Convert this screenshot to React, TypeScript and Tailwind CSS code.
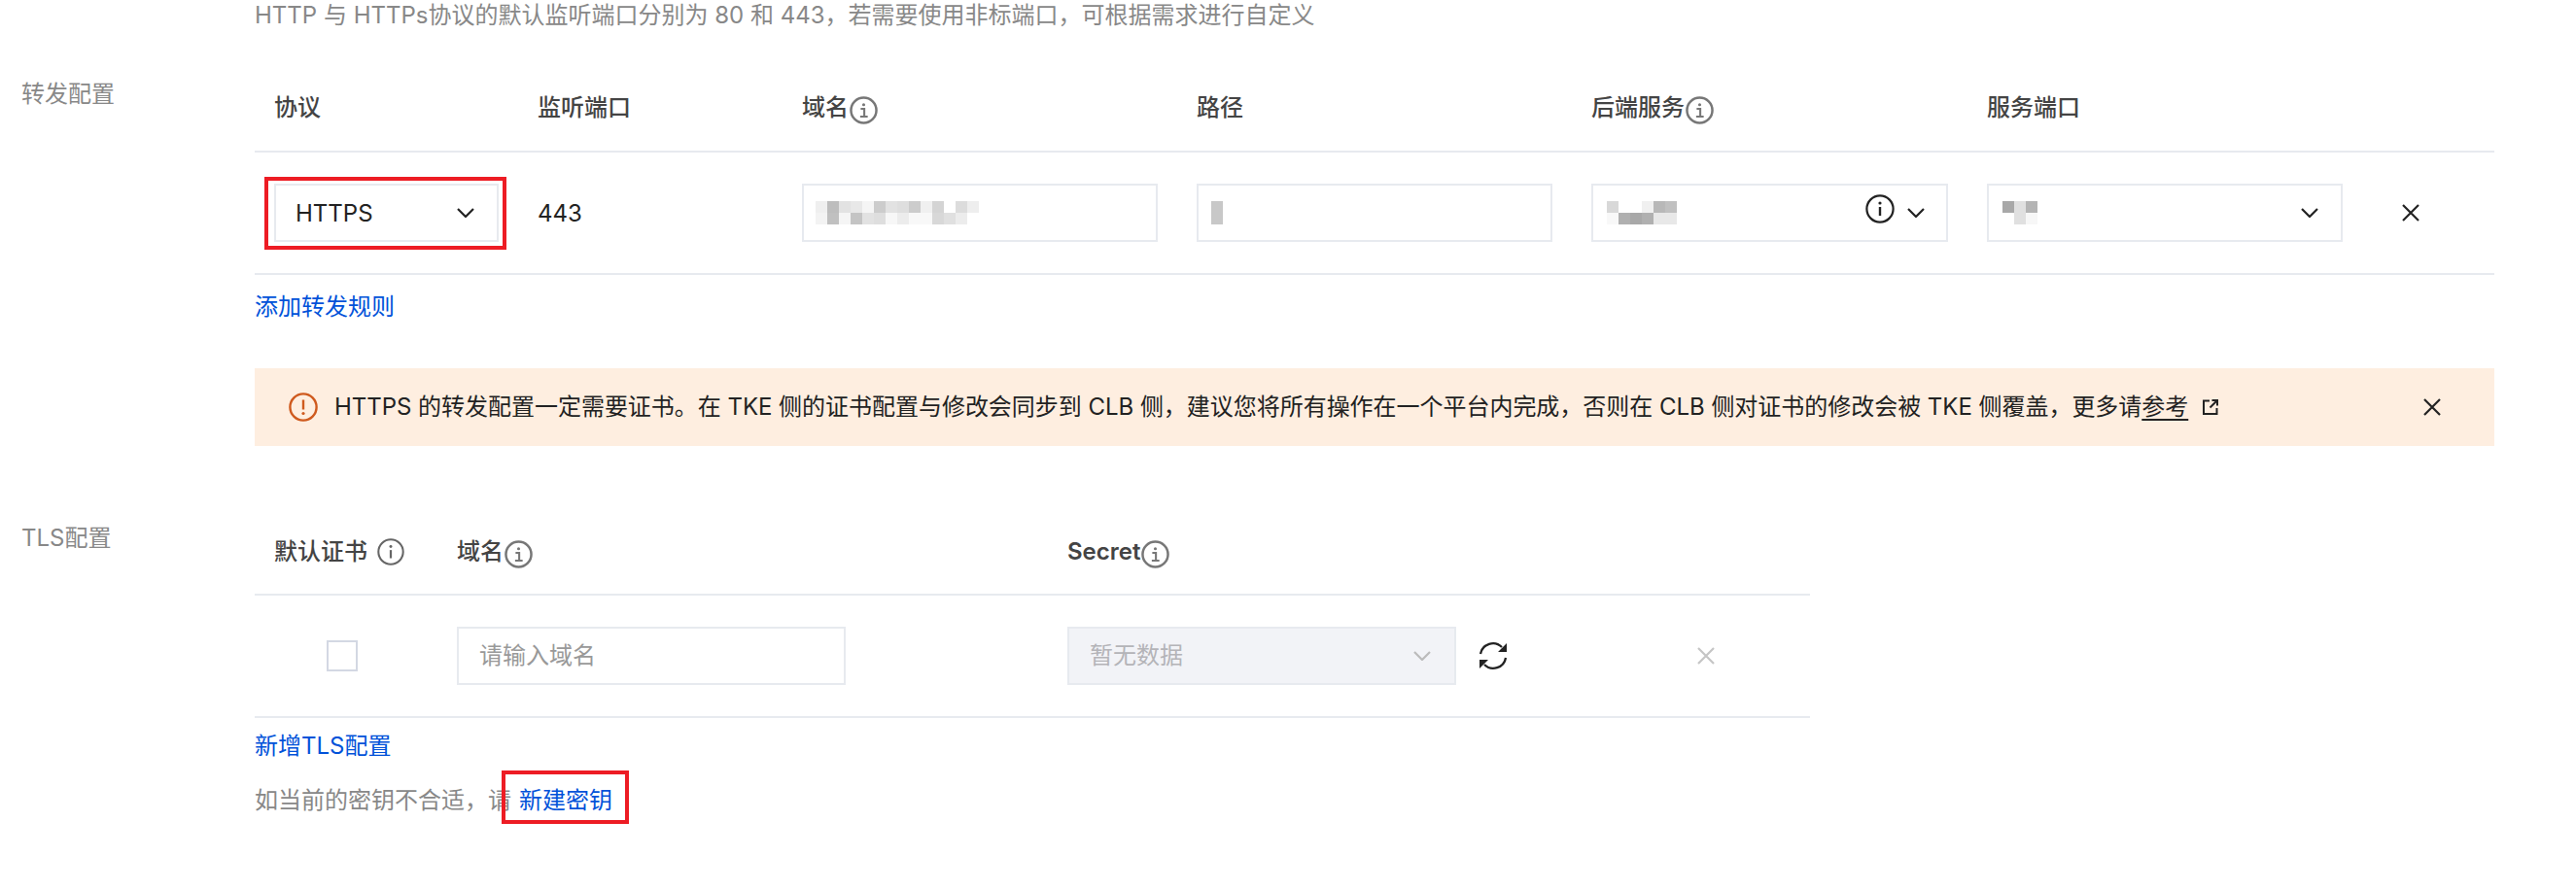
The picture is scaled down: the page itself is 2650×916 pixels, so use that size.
const forwardCols = "grid grid-cols-[271px_272px_406px_406px_407px_406px_136px]";
const tlsCols = "grid grid-cols-[188px_628px_647px_137px]";

function InfoSerif({ className = "" }: { className?: string }) {
  return (
    <svg viewBox="0 0 28 28" className={`w-[29px] h-[29px] shrink-0 ${className}`} fill="none" stroke="currentColor">
      <circle cx="14" cy="14" r="12.6" strokeWidth="2.4" />
      <path d="M11 12.5h3.6V20M10.5 20.2h7.5" strokeWidth="2" />
      <circle cx="14" cy="8.4" r="1.5" fill="currentColor" stroke="none" />
    </svg>
  );
}

function InfoPlain({ className = "" }: { className?: string }) {
  return (
    <svg viewBox="0 0 30 30" className={`shrink-0 ${className}`} fill="none" stroke="currentColor">
      <circle cx="15" cy="15" r="13.6" strokeWidth="2.2" />
      <path d="M15 13v9" strokeWidth="2.4" />
      <circle cx="15" cy="9" r="1.6" fill="currentColor" stroke="none" />
    </svg>
  );
}

function Chevron({ className = "" }: { className?: string }) {
  return (
    <svg viewBox="0 0 18 10" className={`w-[18px] h-[10px] shrink-0 ${className}`} fill="none" stroke="currentColor" strokeWidth="2.2">
      <path d="M1 1l8 8 8-8" />
    </svg>
  );
}

function Close({ className = "" }: { className?: string }) {
  return (
    <svg viewBox="0 0 20 20" className={`w-[20px] h-[20px] shrink-0 ${className}`} fill="none" stroke="currentColor" strokeWidth="2.2">
      <path d="M2 2l16 16M18 2L2 18" />
    </svg>
  );
}

function Mosaic({ rows }: { rows: string[][] }) {
  const cols = rows[0].length;
  return (
    <svg width={cols * 12} height={24} viewBox={`0 0 ${cols * 12} 24`} className="shrink-0" shapeRendering="crispEdges">
      {rows.map((row, r) =>
        row.map((fill, c) => <rect key={`${r}-${c}`} x={c * 12} y={r * 12} width="12" height="12" fill={fill} />)
      )}
    </svg>
  );
}

function Head({ label, icon, className = "" }: { label: string; icon?: boolean; className?: string }) {
  return (
    <div className={`flex items-center gap-[1px] pl-5 text-[#444444] font-medium ${className}`}>
      {label}
      {icon && <InfoSerif className="mt-[5px] text-[#777777]" />}
    </div>
  );
}

function Cell({ children }: { children: React.ReactNode }) {
  return <div className="flex items-center px-5">{children}</div>;
}

function Box({ children, className = "" }: { children?: React.ReactNode; className?: string }) {
  return <div className={`flex items-center h-[60px] border-2 border-[#e7eaef] ${className}`}>{children}</div>;
}

export default function App() {
  return (
    <div className="w-[2650px] h-[916px] bg-white overflow-hidden text-[24px] leading-[32px] text-[#222222] font-['Inter','Noto_Sans_CJK_SC',sans-serif]">
      <div className="pl-[262px] text-[#888888]">
        HTTP 与 HTTPs协议的默认监听端口分别为 80 和 443，若需要使用非标端口，可根据需求进行自定义
      </div>

      {/* 转发配置 */}
      <div className="flex mt-[34px]">
        <div className="w-[262px] shrink-0 pl-[22px] pt-[15px] text-[#888888]">转发配置</div>
        <div className="w-[2304px]">
          <div className={`${forwardCols} h-[91px] border-b-2 border-[#e7eaef]`}>
            <Head label="协议" />
            <Head label="监听端口" />
            <Head label="域名" icon />
            <Head label="路径" />
            <Head label="后端服务" icon />
            <Head label="服务端口" />
          </div>
          <div className={`${forwardCols} h-[126px] border-b-2 border-[#e7eaef]`}>
            <Cell>
              <div className="relative w-full">
                <Box className="w-full justify-between pl-[20px] pr-[23px]">
                  <span className="pt-[2px]">HTTPS</span>
                  <Chevron />
                </Box>
                <div className="absolute -left-[10px] -top-[7px] w-[249px] h-[75px] border-4 border-[#ed1c24]" />
              </div>
            </Cell>
            <Cell>
              <span className="pt-[2px]">443</span>
            </Cell>
            <Cell>
              <Box className="w-full pl-3">
                <Mosaic
                  rows={[
                    ["#efefef", "#bdbdbd", "#e2e2e2", "#e8e8e8", "#f5f5f5", "#cccccc", "#e2e2e2", "#dedede", "#cccccc", "#f0f0f0", "#d4d4d4", "#ffffff", "#dcdcdc", "#eeeeee"],
                    ["#f3f3f3", "#c0c0c0", "#f5f5f5", "#c4c4c4", "#e2e2e2", "#dedede", "#f7f7f7", "#ececec", "#f8f8f8", "#f8f8f8", "#d8d8d8", "#e0e0e0", "#ececec", "#ffffff"],
                  ]}
                />
              </Box>
            </Cell>
            <Cell>
              <Box className="w-full pl-[13px]">
                <Mosaic rows={[["#c8c8c8"], ["#c8c8c8"]]} />
              </Box>
            </Cell>
            <Cell>
              <Box className="w-full justify-between pl-[14px] pr-[22px]">
                <Mosaic
                  rows={[
                    ["#d8d8d8", "#ffffff", "#ffffff", "#f0f0f0", "#b8b8b8", "#c0c0c0"],
                    ["#f8f8f8", "#b0b0b0", "#a8a8a8", "#b0b0b0", "#e8e8e8", "#e8e8e8"],
                  ]}
                />
                <div className="flex items-center gap-[13px]">
                  <InfoPlain className="w-[30px] h-[30px] -mt-[8px] text-[#222222]" />
                  <Chevron />
                </div>
              </Box>
            </Cell>
            <Cell>
              <Box className="w-full justify-between pl-[14px] pr-[23px]">
                <Mosaic
                  rows={[
                    ["#a8a8a8", "#e0e0e0", "#b4b4b4"],
                    ["#ffffff", "#e0e0e0", "#f7f7f7"],
                  ]}
                />
                <Chevron />
              </Box>
            </Cell>
            <div className="flex items-center pl-[40px]">
              <Close className="text-[#222222]" />
            </div>
          </div>
          <div className="mt-[17px] text-[#0052d9]">添加转发规则</div>
        </div>
      </div>

      {/* 提示 */}
      <div className="flex mt-[47px] ml-[262px] w-[2304px] h-[80px] items-center justify-between bg-[#feeee0] pl-[35px] pr-[54px]">
        <div className="flex items-center gap-[17px]">
          <svg viewBox="0 0 30 30" className="w-[30px] h-[30px] shrink-0 text-[#cf5a1e]" fill="none" stroke="currentColor">
            <circle cx="15" cy="15" r="13.6" strokeWidth="2.4" />
            <path d="M15 7.5v10" strokeWidth="2.4" />
            <circle cx="15" cy="21.5" r="1.6" fill="currentColor" stroke="none" />
          </svg>
          <div className="flex items-center tracking-[-0.03px]">
            HTTPS 的转发配置一定需要证书。在 TKE 侧的证书配置与修改会同步到 CLB 侧，建议您将所有操作在一个平台内完成，否则在 CLB 侧对证书的修改会被 TKE 侧覆盖，更多请
            <span className="underline underline-offset-4">参考</span>
            <svg viewBox="0 0 18 18" className="w-[18px] h-[18px] ml-[14px] shrink-0" fill="none" stroke="currentColor" strokeWidth="2">
              <path d="M8 2.5H2v13.5h13.5v-6M10.5 2H16v5.5M16 2L8.5 9.5" />
            </svg>
          </div>
        </div>
        <Close className="text-[#222222]" />
      </div>

      {/* TLS配置 */}
      <div className="flex mt-[63px]">
        <div className="w-[262px] shrink-0 pl-[22px] pt-[16px] text-[#888888]">TLS配置</div>
        <div className="w-[1600px]">
          <div className={`${tlsCols} h-[91px] border-b-2 border-[#e7eaef]`}>
            <div className="flex items-center gap-[10px] pl-5 pt-[2px] text-[#444444] font-medium">
              默认证书
              <InfoPlain className="w-[28px] h-[28px] text-[#666666]" />
            </div>
            <Head label="域名" icon className="pt-[2px]" />
            <Head label="Secret" icon className="pt-[2px] font-semibold" />
            <div />
          </div>
          <div className={`${tlsCols} h-[126px] border-b-2 border-[#e7eaef]`}>
            <div className="flex items-center pl-[74px]">
              <div className="w-[32px] h-[32px] border-2 border-[#d3d8e3]" />
            </div>
            <Cell>
              <Box className="w-[400px] pl-[21px] text-[#999999]">请输入域名</Box>
            </Cell>
            <div className="flex items-center pl-5">
              <Box className="w-[400px] justify-between bg-[#f2f3f7] pl-[21px] pr-[24px] text-[#b4b4b8]">
                暂无数据
                <Chevron className="text-[#bbbbbb]" />
              </Box>
              <svg viewBox="0 0 30 30" className="w-[30px] h-[30px] ml-[23px] shrink-0 text-[#222222]">
                <path d="M2 13A13 13 0 0 1 24 6M28 17A13 13 0 0 1 6 24" fill="none" stroke="currentColor" strokeWidth="2.3" />
                <path d="M29 2v9h-9zM1 28v-9h9z" fill="currentColor" />
              </svg>
            </div>
            <div className="flex items-center pl-5">
              <Close className="text-[#c5c5c5]" />
            </div>
          </div>
          <div className="mt-[13px] text-[#0052d9]">新增TLS配置</div>
          <div className="mt-[24px] text-[#888888]">
            如当前的密钥不合适，请
            <span className="relative ml-2 text-[#0052d9]">
              新建密钥
              <span className="absolute -left-[18px] -top-[16px] w-[131px] h-[55px] border-4 border-[#ed1c24]" />
            </span>
          </div>
        </div>
      </div>
    </div>
  );
}
